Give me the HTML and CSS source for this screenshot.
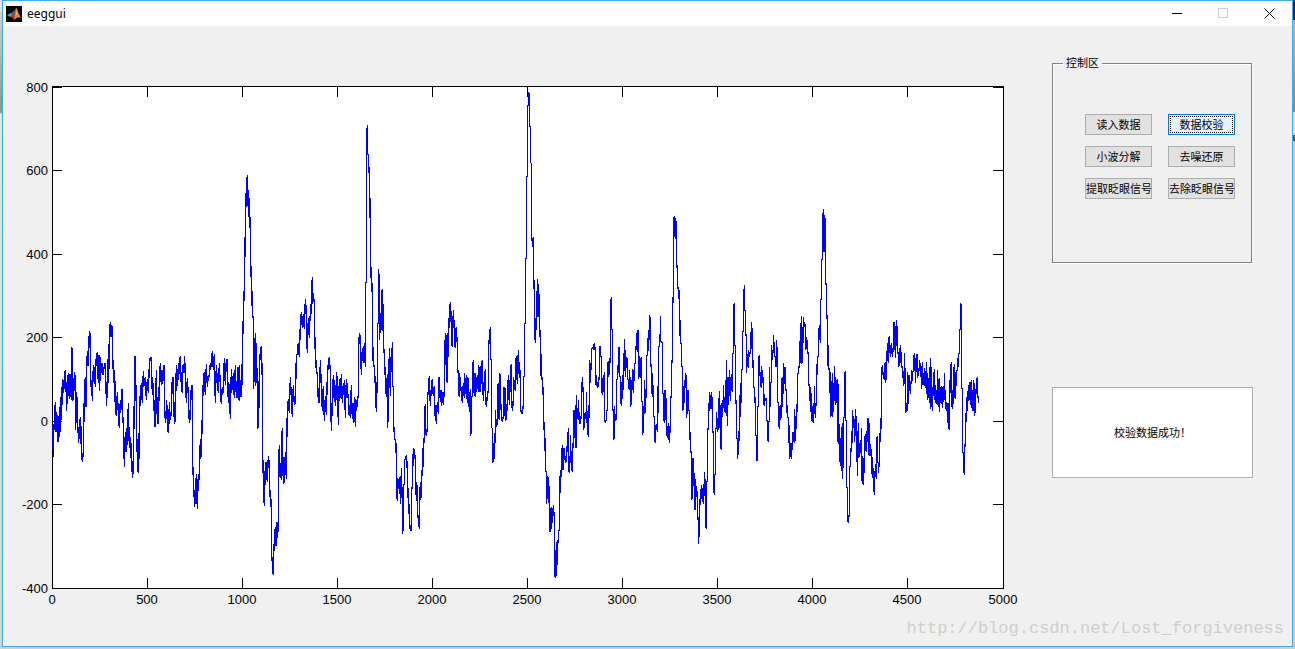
FILE: index.html
```html
<!DOCTYPE html>
<html lang="zh-CN">
<head>
<meta charset="utf-8">
<title>eeggui</title>
<link rel="stylesheet" href="styles.css">
</head>
<body>
<div class="window">
  <header class="titlebar">
    <svg class="app-icon" viewBox="0 0 16 16" aria-hidden="true">
      <rect width="16" height="16" fill="#050505"/>
      <path d="M1 9 L5 7 L7 9 L4 11Z" fill="#4f9fb8"/>
      <path d="M5 7 Q8 6 10 2 L8 9 L6 9Z" fill="#3c6f86"/>
      <path d="M4 11 L7 9 Q9 7 10 2 L11 3 L10 12 L8 14 Q7 11 4 11Z" fill="#b8401c"/>
      <path d="M10 2 Q11 2 12 6 L15 12 Q12 10 8 14 L10 9Z" fill="#e9822b"/>
      <path d="M10 3 L11 8 L9 12Z" fill="#f6bd5d"/>
    </svg>
    <h1 class="title">eeggui</h1>
    <div class="window-buttons">
      <button class="window-button" type="button" aria-label="Minimize"><svg class="glyph" viewBox="0 0 11 11"><path d="M0 5.500H10"/></svg></button>
      <button class="window-button disabled" type="button" aria-label="Maximize" disabled><svg class="glyph" viewBox="0 0 11 11"><path d="M.5 .5H9.500V9.500H.5Z"/></svg></button>
      <button class="window-button" type="button" aria-label="Close"><svg class="glyph smooth" viewBox="0 0 11 11"><path d="M.5 .5L10.500 10.500M10.500 .5L.5 10.500"/></svg></button>
    </div>
  </header>
  <main class="content">
    <svg class="chart" viewBox="3 26 1027 587" role="img" aria-label="EEG">
      <rect class="plot" x="52.500" y="86.500" width="951" height="502"/>
      <path class="axis" d="M147.500 87v10M242.500 87v10M337.500 87v10M432.500 87v10M527.500 87v10M622.500 87v10M717.500 87v10M812.500 87v10M907.500 87v10M147.500 588v-10M242.500 588v-10M337.500 588v-10M432.500 588v-10M527.500 588v-10M622.500 588v-10M717.500 588v-10M812.500 588v-10M907.500 588v-10M52 87.500h10M52 170.500h10M52 254.500h10M52 337.500h10M52 421.500h10M52 504.500h10M1003 87.500h-10M1003 170.500h-10M1003 254.500h-10M1003 337.500h-10M1003 421.500h-10M1003 504.500h-10"/>
      <svg class="trace" x="40" y="280" width="200" height="310" viewBox="0 0 600 930"><polyline points="38,435 40,532 41,460 43,425 46,366 48,455 50,397 52,425 54,486 57,408 59,470 60,380 62,455 64,320 67,375 68,297 71,340 73,290 76,270 78,315 80,392 82,320 85,278 88,358 90,283 94,360 95,202 97,207 98,362 101,355 103,277 106,290 107,450 110,335 113,430 116,488 119,425 122,412 124,515 127,545 130,515 133,345 136,290 138,380 140,275 142,212 145,258 148,154 151,165 152,322 155,300 157,362 160,255 163,270 166,320 168,240 172,217 175,310 177,225 179,332 181,230 184,280 186,248 189,285 192,262 195,250 197,305 200,378 203,237 206,310 208,160 211,126 213,170 214,135 217,142 218,225 221,308 224,270 226,395 229,407 232,337 235,400 238,445 241,360 244,390 246,327 248,430 250,410 253,560 256,457 258,515 259,445 262,495 265,370 268,505 270,470 272,535 274,490 277,593 280,570 282,410 285,229 288,330 290,455 293,575 296,577 298,425 301,335 304,310 307,370 310,273 312,318 316,290 319,360 322,297 325,340 328,255 331,232 334,232 337,345 340,310 344,440 346,440 349,270 352,425 355,433 358,300 361,250 364,315 366,270 368,312 371,255 373,258 374,400 377,428 380,360 383,450 386,458 388,367 391,420 394,395 397,292 400,292 403,433 406,420 409,256 411,318 413,268 416,300 418,235 421,229 424,320 427,340 429,255 432,280 433,229 436,265 439,370 442,295 445,345 448,430 451,410 454,318 457,317 458,550 461,618 464,680 467,635 469,583 472,688 475,583 478,600 481,478 484,530 487,400 490,300 493,277 496,345 499,253 502,320 505,285 508,290 511,250 514,262 517,213 520,270 523,222 526,368 529,255 532,300 535,340 538,250 541,315 544,373 547,320 550,340 553,235 556,315 559,238 562,238 565,370 568,312 571,418 574,268 577,330 580,280 583,355 586,255 589,350 592,355 594,262 597,360"/></svg>
      <svg class="trace" x="230" y="120" width="200" height="470" viewBox="0 0 600 1410"><polyline points="27,840 28,736 29,842 32,780 35,830 37,703 40,585 43,503 46,325 49,202 52,165 54,222 55,290 58,234 61,340 62,470 64,438 67,580 70,595 71,808 73,730 76,640 77,797 79,670 82,812 83,928 86,908 88,748 91,695 94,678 97,778 98,998 101,1120 103,1157 106,1035 109,1025 109,1080 112,1025 112,1085 115,1008 118,1030 119,1098 122,1160 124,1138 125,1303 128,1342 130,1366 130,1273 133,1292 134,1250 136,1222 138,1278 140,1207 143,1255 145,1190 145,1050 148,975 148,1070 151,1030 154,1080 154,968 157,925 160,1093 163,1010 163,1090 166,997 169,1077 170,982 172,868 175,838 178,880 181,771 184,830 187,890 190,795 193,855 196,850 199,710 202,700 205,668 208,710 211,613 214,577 217,623 220,582 223,628 226,538 229,570 230,655 232,698 235,595 238,655 240,588 242,597 244,538 247,471 248,553 250,520 253,550 254,688 256,652 258,740 262,765 265,842 268,850 271,720 274,800 277,872 280,797 283,902 286,828 289,885 292,770 295,730 298,711 301,755 304,932 307,845 310,766 313,845 314,780 317,858 320,757 323,815 325,914 328,778 331,835 334,762 337,850 340,790 343,830 344,780 346,895 349,778 352,800 355,840 355,885 358,855 361,895 364,796 367,897 370,862 371,910 373,832 376,920 377,838 380,872 382,830 385,835 385,710 388,640 391,650 394,764 397,685 400,730 403,670 406,740 406,490 409,485 409,85 412,15 412,104 415,105 415,158 418,140 421,320 422,475 424,442 427,530 428,660 430,740 433,735 436,800 439,875 442,770 442,612 445,612 445,448 448,475 449,660 451,580 454,630 456,512 458,508 460,670 463,705 466,775 469,830 472,763 473,925 475,790 475,907 478,685 481,827 484,690 485,750 487,667 488,800 490,800 491,915 494,957 497,960 499,1010 499,970 499,1115 502,1142 502,1075 505,1108 508,1072 512,1153 514,1045 517,1150 517,1241 520,1225 520,1093 523,1093 523,1023 526,1017 529,1006 529,1045 532,1023 532,1133 535,1105 538,1195 541,1232 544,1230 545,1108 547,1100 550,985 553,990 556,1020 559,1143 562,1095 562,1168 565,1200 568,1226 568,1100 571,1140"/></svg>
      <svg class="trace" x="420" y="80" width="200" height="510" viewBox="0 0 600 1530"><polyline points="1,1205 1,1258 4,1250 4,1170 7,1188 7,1105 10,1160 10,1075 13,1090 13,1017 16,972 16,1037 19,1068 22,1045 22,963 25,930 28,888 31,978 34,920 37,897 40,948 43,918 43,1008 46,975 49,1032 52,965 55,1002 55,905 58,890 61,965 64,930 64,978 67,935 70,975 73,930 73,780 76,855 76,760 79,770 79,900 82,908 82,760 85,832 85,715 88,745 88,702 91,667 91,725 94,693 94,797 97,710 97,800 100,690 103,745 103,797 106,803 106,770 109,741 112,795 112,880 115,870 115,930 118,952 118,880 121,900 124,940 127,968 130,910 133,955 133,880 136,942 139,885 142,970 142,890 145,900 148,995 151,927 151,1067 154,1058 154,950 157,950 157,875 160,840 160,940 163,880 163,935 166,950 166,880 169,937 172,885 175,935 175,855 178,937 178,862 181,937 181,858 184,912 184,855 187,840 190,963 193,905 196,867 196,945 199,980 202,945 205,930 205,808 208,775 211,741 211,838 214,840 214,1042 217,1045 217,1150 220,1140 220,1090 223,1137 223,1060 226,1090 226,990 229,1040 232,1030 232,912 235,1017 235,910 238,1020 238,880 241,885 241,940 244,1000 247,1025 250,1010 250,925 253,922 256,1022 256,925 259,1020 262,965 262,900 265,950 265,885 268,975 268,900 271,935 271,875 274,852 274,930 277,993 280,965 280,890 283,910 286,932 286,870 289,828 292,912 295,810 298,895 298,845 301,895 301,978 304,1000 307,1000 310,975 310,890 313,890 313,732 316,730 316,537 319,535 319,292 322,290 322,80 325,75 325,37 328,42 328,140 331,140 331,247 334,250 334,482 337,478 337,500 340,470 340,628 343,600 343,740 346,788 346,715 349,750 349,633 352,710 352,598 355,710 355,612 358,670 358,770 361,750 361,887 364,823 364,898 367,892 367,945 370,920 370,1050 373,1025 373,1112 376,1075 376,1173 379,1175 379,1272 382,1187 385,1270 385,1190 388,1243 388,1350 391,1355 391,1283 394,1347 394,1280 397,1330 400,1275 403,1315 403,1478 406,1493 406,1410 409,1487 409,1385 412,1455 412,1380 415,1390 415,1355 418,1350 418,1188 421,1240 421,1170 424,1192 424,1150 427,1095 427,1165 430,1170 430,1115 433,1103 436,1148 439,1145 439,1098 442,1115 445,1045 445,1165 448,1178 451,1120 451,1065 454,1155 457,1175 457,1090 460,1105 460,1000 463,990 463,1075 466,975 466,1090 469,1105 469,945 472,1017 475,1000 475,960 478,1030 481,1032 484,1005 484,980 487,892 490,945 490,1050 493,1040 493,1020 496,995 499,1020 499,937 502,1047 505,1070 505,975 508,1015 508,840 511,908 511,850 514,870 514,810 517,803 520,808 523,789 526,815 526,915 529,885 532,925 535,915 535,892 538,900 538,807 541,798 541,828 544,830 544,900 547,945 550,885 550,935 553,877 553,1010 556,1030 559,1018 559,990 562,993 562,845 565,892 565,842 568,885 568,835 571,850 571,818"/></svg>
      <svg class="trace" x="610" y="200" width="200" height="360" viewBox="0 0 600 1080"><polyline points="1,488 1,330 4,291 4,388 7,390 7,630 10,630 10,718 13,715 13,618 16,662 19,655 19,540 22,540 22,495 25,520 25,447 28,441 28,530 31,530 31,590 34,617 34,545 37,597 37,525 40,570 40,460 43,490 43,417 46,530 46,450 49,505 49,470 52,480 52,533 55,540 58,570 58,510 61,550 61,620 64,608 64,540 67,563 67,507 70,580 70,510 73,542 73,492 76,490 76,440 79,440 79,400 82,457 82,393 85,393 85,537 88,468 88,525 91,533 91,480 94,472 94,605 97,605 97,705 100,690 100,618 103,643 103,540 106,640 106,568 109,593 109,468 112,467 112,415 115,452 115,390 118,420 118,345 121,357 121,500 124,492 124,583 127,520 127,592 130,555 130,648 133,650 133,692 136,730 136,695 139,672 142,695 142,558 145,638 145,440 148,440 148,402 151,422 151,348 151,422 154,425 157,427 157,580 160,580 160,630 163,670 163,580 166,570 166,660 169,595 169,690 172,713 175,670 178,730 178,678 181,698 181,590 184,592 184,480 187,488 187,290 190,310 190,67 193,49 193,110 196,55 196,118 199,64 199,203 202,195 202,268 205,260 205,298 208,270 208,407 211,360 211,430 214,430 214,500 217,500 217,632 220,625 220,558 223,610 223,540 226,563 226,520 229,528 229,655 232,632 232,578 235,570 235,630 238,632 238,720 241,695 241,757 244,755 244,898 247,893 247,777 250,775 250,857 253,820 253,927 256,930 256,837 259,890 259,858 262,890 262,960 265,950 265,1031 268,992 268,898 271,915 271,868 274,898 274,855 277,895 277,865 280,913 280,852 283,887 283,817 286,855 286,965 289,987 289,847 292,845 292,687 295,688 295,608 298,632 298,577 301,627 301,585 304,627 304,577 307,605 307,697 310,695 310,850 313,884 313,825 316,822 316,687 319,685 319,637 322,695 322,655 325,690 325,595 328,685 328,574 331,650 331,735 334,750 334,608 337,652 337,600 340,625 340,556 343,635 343,590 346,638 346,540 349,592 349,480 352,677 352,530 355,615 355,530 358,572 358,510 361,602 361,530 364,572 364,522 367,575 367,462 370,460 370,328 373,309 373,435 376,437 376,612 379,600 379,717 382,715 382,776 385,757 385,693 388,722 388,585 391,652 391,550 394,608 394,510 397,510 397,393 400,397 400,333 403,255 403,330 406,332 406,405 409,405 409,518 412,462 412,495 415,503 415,450 418,470 421,455 421,397 424,447 424,367 427,400 427,503 430,480 430,562 433,562 433,610 436,592 436,707 439,708 439,780 442,782 442,622 445,620 445,480 448,465 448,527 451,515 451,543 454,563 454,498 457,548 457,510 460,550 460,597 463,617 463,583 466,603 469,594 469,662 472,663 472,700 475,725 475,663 478,665 478,502 481,622 481,548 484,548 484,435 487,480 487,450 490,458 490,405 493,445 493,470 496,470 496,500 499,500 499,420 502,460 502,608 505,608 505,660 508,686 508,618 511,660 511,615 514,653 514,535 517,622 517,530 520,583 520,490 523,552 523,507 526,502 526,570 529,570 529,640 532,615 532,653 535,653 535,728 538,675 538,776 541,730 541,748 544,776 544,730 547,750 547,697 550,725 550,697 553,728 553,628 556,722 556,648 559,686 559,612 562,635 562,522 565,520 565,498 568,503 568,423"/></svg>
      <svg class="trace" x="800" y="200" width="210" height="400" viewBox="0 0 630 1200"><polyline points="-2,303 -2,490 1,410 1,490 4,348 4,493 7,483 7,380 10,430 10,351 13,380 13,370 16,375 16,448 19,445 19,412 22,425 22,450 25,465 25,555 28,555 28,602 31,562 31,635 34,580 34,655 37,665 37,618 40,670 40,610 43,632 43,558 46,655 46,617 49,617 49,492 52,525 52,470 55,470 55,385 58,400 58,375 61,428 61,300 64,298 64,180 67,180 67,112 70,28 70,157 73,45 73,155 76,55 76,253 79,250 79,358 82,345 82,497 85,435 85,508 88,505 88,580 91,517 91,650 94,543 94,640 97,650 97,520 100,635 100,550 103,603 103,498 106,615 106,530 109,610 109,550 112,537 112,725 115,553 115,732 118,672 118,785 121,713 121,795 124,797 124,682 127,838 127,670 130,803 130,653 133,652 133,525 136,514 136,662 139,663 139,860 142,862 142,953 145,968 145,945 148,950 148,802 151,800 151,743 154,757 154,693 157,730 157,630 160,685 160,648 163,668 163,727 166,690 166,627 169,670 169,785 172,700 172,827 175,670 175,775 178,728 178,772 181,745 181,720 184,745 184,683 184,842 187,768 187,850 190,853 190,773 193,818 193,730 196,703 196,747 199,755 199,693 202,727 202,658 205,655 205,765 208,668 208,767 211,733 211,767 214,747 214,822 217,770 217,835 220,805 220,838 223,884 223,812 226,832 226,793 229,838 229,720 232,708 232,785 235,787 235,818 238,787 238,700 241,725 241,655 244,686 244,528 247,495 247,525 250,515 250,535 253,533 253,490 256,548 256,487 259,540 259,453 262,482 262,430 265,490 265,420 268,408 268,460 271,437 271,470 274,430 274,463 277,445 277,470 280,440 280,372 283,366 283,450 286,432 286,473 289,360 289,438 292,378 292,460 295,460 295,500 298,448 298,497 301,435 301,490 304,457 304,503 307,500 307,535 310,512 310,557 313,545 313,460 316,545 316,640 319,610 319,635 322,632 322,517 325,612 325,525 328,555 328,525 331,582 331,543 334,552 334,510 337,542 337,515 340,515 340,487 343,460 343,512 346,487 346,550 349,462 349,515 352,462 352,532 355,525 355,503 358,512 358,480 361,500 361,530 364,525 364,567 367,487 367,555 370,520 370,547 373,557 373,503 376,565 376,512 379,570 379,487 382,600 382,518 385,595 385,535 388,583 388,500 391,628 391,475 394,620 394,500 397,633 397,560 400,588 400,570 403,508 403,600 406,555 406,610 409,570 409,610 412,613 412,510 415,597 415,537 418,635 418,535 421,610 421,560 424,600 424,557 427,623 427,560 430,607 430,557 433,600 433,520 436,615 436,585 439,633 439,607 442,610 442,668 445,610 445,665 448,690 448,540 451,580 451,520 454,487 454,578 457,627 457,570 460,612 460,550 463,492 463,575 466,597 466,515 469,558 469,510 472,513 472,475 475,500 475,463 478,460 478,388 481,388 481,310 484,316 484,563 487,565 487,755 490,757 490,797 493,824 493,733 496,740 496,640 499,665 499,590 502,632 502,573 505,602 505,555 508,597 508,547 511,608 511,545 514,625 514,540 517,632 517,570 520,603 520,540 523,648 523,550 526,640 526,568 529,583 529,538 532,532 532,592 535,587 535,608"/></svg>
      <g class="tick-labels y">
        <text x="48" y="92">800</text><text x="48" y="175">600</text><text x="48" y="259">400</text><text x="48" y="342">200</text><text x="48" y="426">0</text><text x="48" y="509">-200</text><text x="48" y="593">-400</text>
      </g>
      <g class="tick-labels x">
        <text x="52" y="604">0</text><text x="147" y="604">500</text><text x="242" y="604">1000</text><text x="337" y="604">1500</text><text x="432" y="604">2000</text><text x="527" y="604">2500</text><text x="622" y="604">3000</text><text x="717" y="604">3500</text><text x="812" y="604">4000</text><text x="907" y="604">4500</text><text x="1003" y="604">5000</text>
      </g>
    </svg>
    <aside class="side">
      <fieldset class="controls">
        <legend class="legend">控制区</legend>
        <div class="button-grid">
          <button class="command" type="button">读入数据</button>
          <button class="command active" type="button">数据校验</button>
          <button class="command" type="button">小波分解</button>
          <button class="command" type="button">去噪还原</button>
          <button class="command" type="button">提取眨眼信号</button>
          <button class="command" type="button">去除眨眼信号</button>
        </div>
      </fieldset>
      <output class="message">校验数据成功！</output>
    </aside>
  </main>
  <footer class="footer">http://blog.csdn.net/Lost_forgiveness</footer>
</div>
</body>
</html>
```
FILE: styles.css
```css
* {
  box-sizing: border-box;
}

body {
  margin: 0;
  padding: 0 2px 2px;
  min-height: 100vh;
  display: flex;
  background:
    linear-gradient(#0b2c4e 0 20px, #b4b4b4 20px, #868686 112px, #dedede 112px 135px, #555 135px 141px, #c8c8c8 141px) right top / 2px 100% no-repeat,
    linear-gradient(#d8e4e8 0 12px, #d0d0d0 12px, #8e8e8e 112px, #e4e4e4 114px, #d4d4d4) left top / 2px 100% no-repeat,
    #cfcfcf;
  font-family: "Liberation Sans", "Noto Sans CJK SC", sans-serif;
  color: #000;
}

.window {
  flex: 1;
  display: flex;
  flex-direction: column;
  border: 1px solid #3daaf0;
  background: #f0f0f0;
}

.titlebar {
  display: flex;
  align-items: center;
  height: 25px;
  padding-left: 3px;
  background: #fff;
}

.app-icon {
  width: 16px;
  height: 16px;
}

.title {
  flex: 1;
  margin: 0 0 0 5px;
  font: 400 12px/16px "Noto Sans", sans-serif;
}

.window-buttons {
  display: flex;
  align-self: stretch;
}

.window-button {
  display: flex;
  align-items: center;
  justify-content: center;
  width: 46px;
  padding: 0;
  border: 0;
  background: transparent;
}

.glyph {
  width: 11px;
  height: 11px;
  fill: none;
  stroke: #000;
  shape-rendering: crispEdges;
}

.glyph.smooth {
  shape-rendering: auto;
}

.disabled .glyph {
  stroke: #ccc;
}

.content {
  display: grid;
  grid-template-columns: minmax(0, 1fr) 201px;
  gap: 22px;
  padding-right: 39px;
}

.chart {
  display: block;
  width: 100%;
  height: auto;
}

.plot {
  fill: #fff;
  stroke: #000;
  shape-rendering: crispEdges;
}

.axis {
  fill: none;
  stroke: #000;
  shape-rendering: crispEdges;
}

.trace {
  fill: none;
  stroke: #00f;
  stroke-width: 4;
  stroke-linejoin: bevel;
  shape-rendering: crispEdges;
}

.tick-labels {
  font: 13px "Liberation Sans", sans-serif;
}

.tick-labels.y {
  text-anchor: end;
}

.tick-labels.x {
  text-anchor: middle;
}

.side {
  padding-top: 31px;
}

.controls {
  margin: 0 1px 0 0;
  padding: 45px 0 63px;
  border: 1px solid #828282;
  box-shadow: 1px 1px 0 #fff, inset 1px 1px 0 #fff;
}

.legend {
  margin-left: 10px;
  padding: 0 3px;
  background: #f0f0f0;
  font-size: 11px;
  line-height: 12px;
}

.button-grid {
  display: grid;
  grid-template-columns: 67px 67px;
  gap: 11px 16px;
  padding-left: 32px;
}

.command {
  height: 21px;
  padding: 0;
  border: 1px solid #adadad;
  background: #e1e1e1;
  color: #000;
  font: 11px/12px "Liberation Sans", "Noto Sans CJK SC", sans-serif;
  white-space: nowrap;
}

.command.active {
  border-color: #0078d7;
  background: #e5f1fb;
  outline: 1px dotted #000;
  outline-offset: -3px;
}

.message {
  display: flex;
  align-items: center;
  justify-content: center;
  height: 91px;
  margin-top: 124px;
  padding-bottom: 2px;
  border: 1px solid #abadb3;
  background: #fff;
  font-size: 11px;
}

.footer {
  margin-top: auto;
  padding: 0 8px 7px;
  color: #cfcfca;
  font: 17px/20px "Liberation Mono", monospace;
  text-align: right;
}
```
